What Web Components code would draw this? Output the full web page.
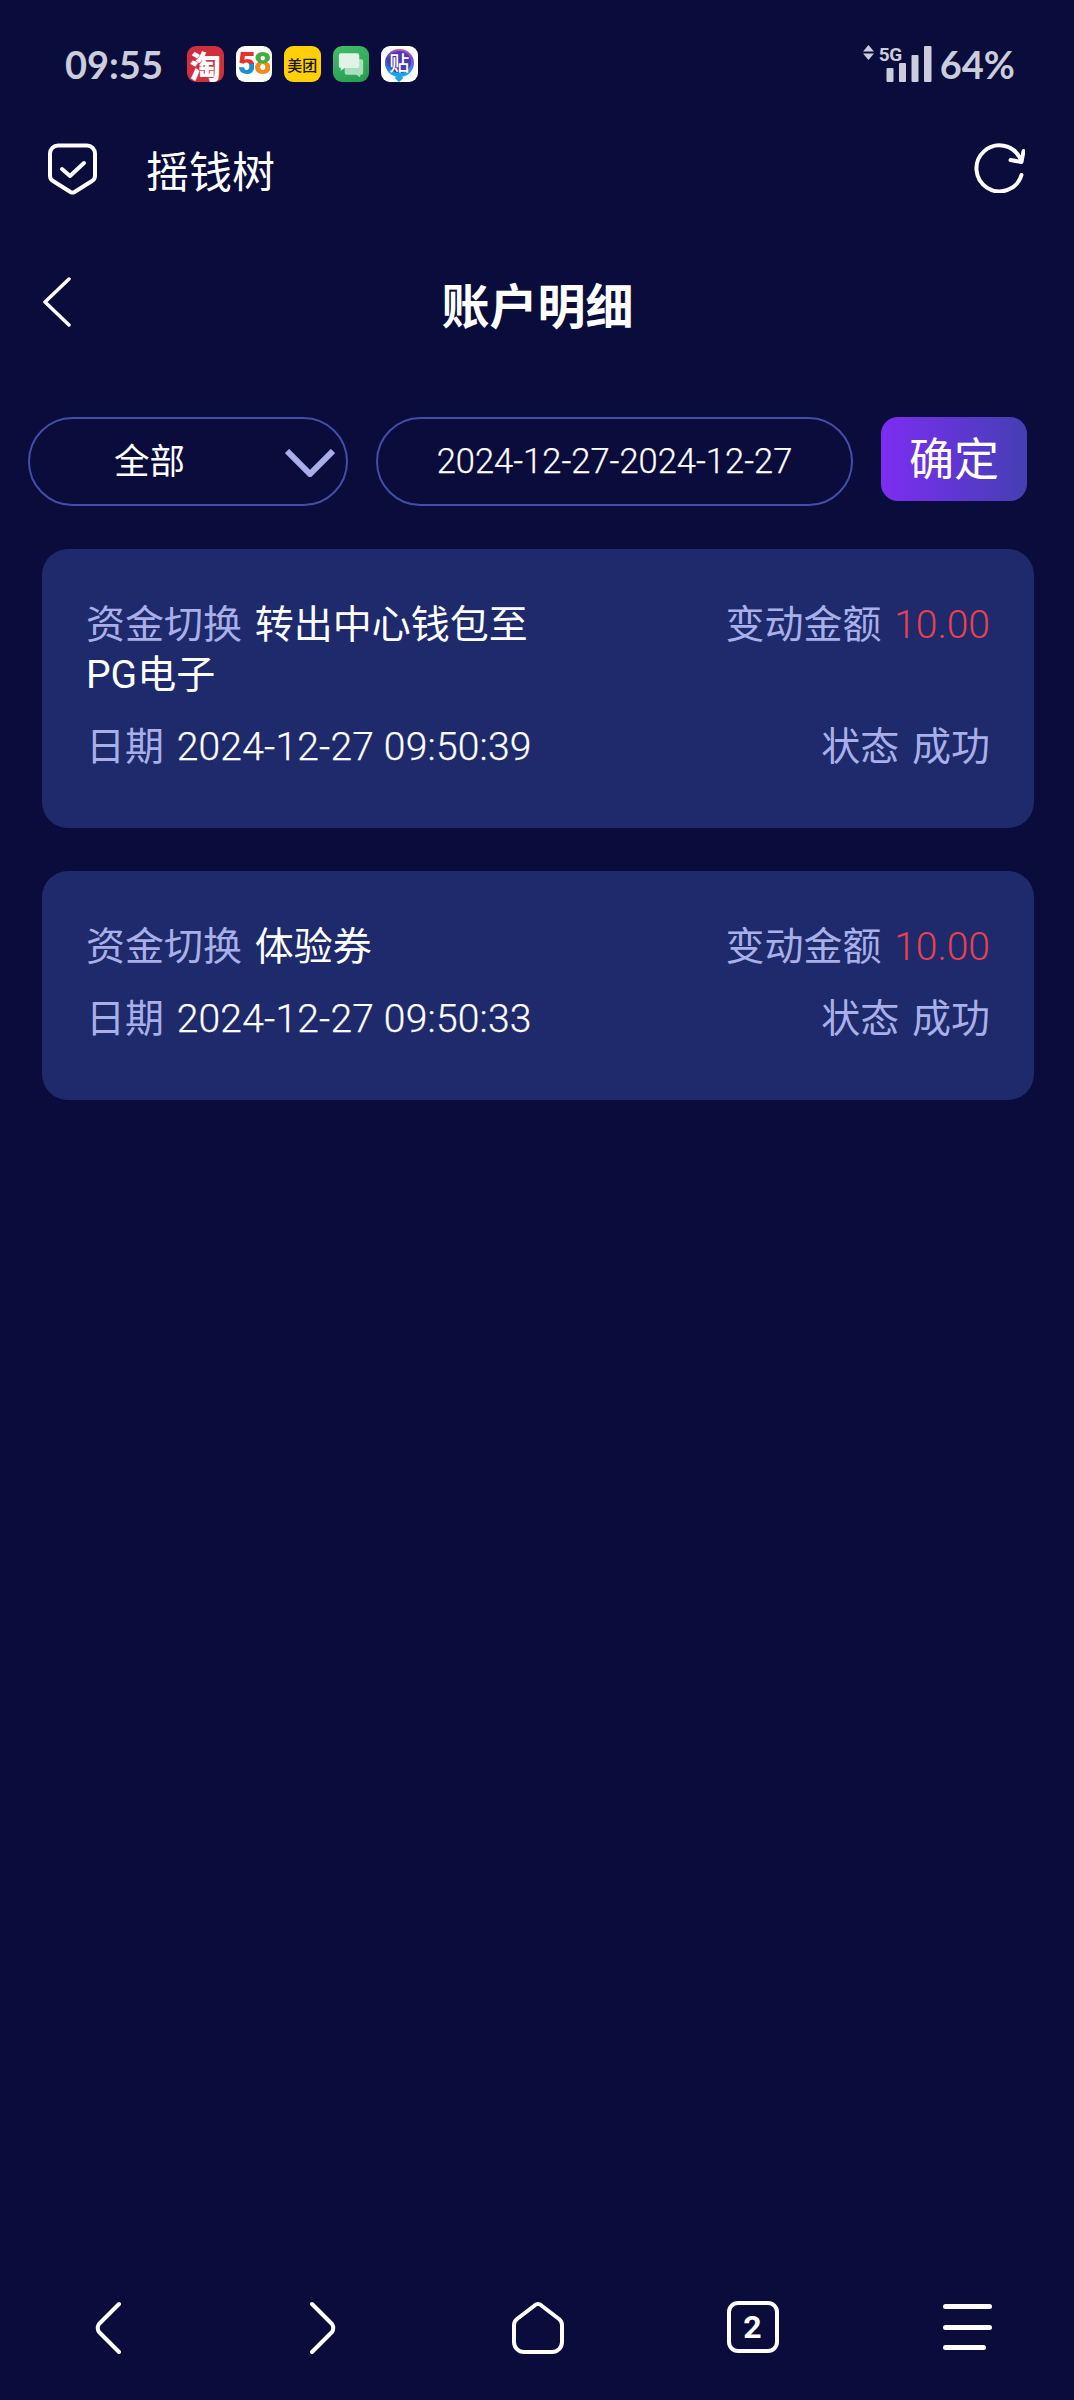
<!DOCTYPE html>
<html lang="zh-CN">
<head>
<meta charset="utf-8">
<title>账户明细</title>
<style>
  html, body { margin: 0; background: #0a0c3b; }
  body { font-family: Roboto, "Noto Sans CJK SC", sans-serif; color: #fff; }
</style>
</head>
<body>
<account-page>
  <status-bar></status-bar>
  <site-bar>摇钱树</site-bar>
  <page-nav>账户明细</page-nav>
  <filter-bar></filter-bar>
  <record-list>
    <record-card>
      <span slot="detail">转出中心钱包至</span><span slot="detail">PG电子</span>
      <span slot="amount">10.00</span>
      <span slot="date">2024-12-27 09:50:39</span>
      <span slot="state">成功</span>
    </record-card>
    <record-card>
      <span slot="detail">体验券</span>
      <span slot="amount">10.00</span>
      <span slot="date">2024-12-27 09:50:33</span>
      <span slot="state">成功</span>
    </record-card>
  </record-list>
  <bottom-bar></bottom-bar>
</account-page>

<script>
// Small helper: one template per element, parsed only once.
function makeTemplate(html) {
  const t = document.createElement('template');
  t.innerHTML = html;
  return t;
}

function register(tag, html) {
  const template = makeTemplate(html);
  customElements.define(tag, class extends HTMLElement {
    constructor() {
      super();
      this.attachShadow({ mode: 'open' });
      this.shadowRoot.appendChild(template.content.cloneNode(true));
    }
  });
}

register('account-page', /*html*/`
  <style>
    :host { display: flex; flex-direction: column; height: 2400px; background: #0a0c3b; overflow: hidden; }
  </style>
  <slot></slot>
`);

register('app-icon', /*html*/`
  <style>
    :host {
      display: flex; align-items: center; justify-content: center;
      position: relative;
      width: 36.5px; height: 36px; border-radius: 9px;
      background: var(--bg, #fff); color: var(--fg, #fff);
      font-family: "Noto Sans CJK SC", sans-serif; font-weight: 700;
      line-height: 1; white-space: nowrap;
    }
  </style>
  <slot></slot>
`);

register('status-bar', /*html*/`
  <style>
    :host {
      display: flex; align-items: flex-start; height: 36px;
      padding: 46px 59px 0 65px;
      font-family: Lato, sans-serif; font-weight: 700; color: #cbccdc;
    }
    .time { font-size: 38px; line-height: 44px; margin-top: -4px; height: 44px; width: 122px; }
    .apps { display: flex; gap: 12px; }
    .tao { --bg: #d12f3e; font-size: 31px; font-weight: 900; }
    .five { --bg: #fff; font-family: Roboto, sans-serif; font-size: 31px; letter-spacing: -2px; }
    .five b { font-weight: 900; line-height: 36px; -webkit-background-clip: text; background-clip: text; color: transparent; }
    .five .d5 { background-image: linear-gradient(#e5322d 50%, #1a8fdc 50%); }
    .five .d8 { background-image: linear-gradient(#43ad3f 48%, #f08a1d 48%); }
    .mt { --bg: #ffcf0a; --fg: #1a1500; font-size: 15px; font-weight: 500; }
    .msg { --bg: linear-gradient(160deg, #41bd69, #259b50); }
    .msg svg { display: block; }
    .tie { --bg: #fff; }
    .tie i {
      position: absolute; left: 4px; top: 3px; width: 29px; height: 28px; border-radius: 50%;
      background: conic-gradient(#e0479e, #7d4fd8, #1aa6e6, #1aa6e6, #3f44b8, #e0479e);
    }
    .tie i::after {
      content: ""; position: absolute; left: 3px; top: 2px; right: 3px; bottom: 4px;
      border-radius: 50%; background: #4a3bb0;
    }
    .tie u {
      position: absolute; left: 15px; bottom: 1.5px; width: 6px; height: 6px;
      background: #1aa6e6; transform: rotate(45deg);
    }
    .tie span { position: relative; font-size: 20px; font-weight: 500; color: #fff; margin-top: -3px; }
    .right { display: flex; align-items: flex-start; gap: 8px; margin-left: auto; }
    .signal { position: relative; width: 69px; height: 37px; margin-top: -1px; }
    .signal svg { display: block; }
    .signal span {
      position: absolute; left: 16px; top: 2px; font: 700 19px/16px Roboto, sans-serif;
      letter-spacing: -.5px;
    }
    .battery { font-size: 38px; line-height: 44px; margin-top: -4px; height: 44px; font-weight: 700; }
  </style>
  <div class="time">09:55</div>
  <div class="apps">
    <app-icon class="tao">淘</app-icon>
    <app-icon class="five"><b class="d5">5</b><b class="d8">8</b></app-icon>
    <app-icon class="mt">美团</app-icon>
    <app-icon class="msg">
      <svg width="36" height="36" viewBox="0 0 37 36">
        <path d="M14 13h15a2 2 0 0 1 2 2v12a2 2 0 0 1-2 2h-1v3l-4-3H14a2 2 0 0 1-2-2V15a2 2 0 0 1 2-2z" fill="#a9dfbc"/>
        <path d="M8 7h17a2 2 0 0 1 2 2v11a2 2 0 0 1-2 2H12l-4 3v-3a2 2 0 0 1-2-2V9a2 2 0 0 1 2-2z" fill="#e0f3e6"/>
      </svg>
    </app-icon>
    <app-icon class="tie"><i></i><u></u><span>贴</span></app-icon>
  </div>
  <div class="right">
    <div class="signal">
      <svg width="69" height="37" viewBox="0 0 69 37" fill="#cbccdc">
        <path d="M5.500 0 11 6.500H0zM5.500 15 0 8.500H11z"/>
        <rect x="23.500" y="23" width="7" height="14" rx="1"/>
        <rect x="36" y="18" width="7" height="19" rx="1"/>
        <rect x="48.500" y="10" width="7" height="27" rx="1"/>
        <rect x="61" y="1" width="7.500" height="36" rx="1"/>
      </svg>
      <span>5G</span>
    </div>
    <div class="battery">64%</div>
  </div>
`);

register('site-bar', /*html*/`
  <style>
    :host {
      display: flex; align-items: flex-start; margin-top: 61px; padding: 0 49px 0 48px;
      font-family: "Noto Sans CJK SC", sans-serif; font-size: 43px; font-weight: 400; color: #fff;
    }
    .name { margin-left: 49px; line-height: 52px; }
    .reload { margin-left: auto; display: block; }
    svg { display: block; fill: none; stroke: #fff; stroke-width: 4; stroke-linecap: round; stroke-linejoin: round; }
  </style>
  <svg width="49" height="52" viewBox="0 0 49 52">
    <path d="M10 2.500H39a8 8 0 0 1 8 8V33a6 6 0 0 1-3 5L26.500 49a4 4 0 0 1-4 0L5 38a6 6 0 0 1-3-5V10.500a8 8 0 0 1 8-8z"/>
    <path d="M14 26l8 7 14-13"/>
  </svg>
  <div class="name"><slot></slot></div>
  <svg class="reload" width="51" height="50" viewBox="0 0 51 50">
    <path d="M47.500 32A23 23 0 1 1 46 15"/>
    <path d="M49.500 8 47.500 19 36.500 17"/>
  </svg>
`);

register('page-nav', /*html*/`
  <style>
    :host {
      display: grid; grid-template-columns: 1fr auto 1fr; align-items: center;
      margin-top: 82px; padding-left: 43px; height: 50px;
    }
    svg { display: block; fill: none; stroke: #fff; stroke-width: 3.500; stroke-linecap: round; stroke-linejoin: round; }
    h1 {
      margin: 0; font: 700 48px/50px "Noto Sans CJK SC", sans-serif; color: #fff;
      transform: translate(-21px, 1px);
    }
  </style>
  <svg width="28" height="50" viewBox="0 0 28 50"><path d="M26 2 2 25l24 23"/></svg>
  <h1><slot></slot></h1>
  <span></span>
`);

register('filter-bar', /*html*/`
  <style>
    :host { display: flex; align-items: flex-start; gap: 28px; margin-top: 90px; padding-left: 28px; }
    .pill {
      box-sizing: border-box; height: 89px; border: 2.500px solid #414fa8; border-radius: 45px;
      display: flex; align-items: center; color: #fff; line-height: 1;
    }
    .type {
      width: 320px; padding: 0 11px 6px 84px;
      font: 400 35.500px "Noto Sans CJK SC", sans-serif;
    }
    .type svg { display: block; margin-left: auto; margin-top: 8px; fill: none; stroke: #a9aeea; stroke-width: 6; }
    .range {
      width: 477px; padding-bottom: 2px; justify-content: center;
      font: 300 34.500px Roboto, sans-serif; -webkit-text-stroke: .25px #fff;
    }
    button {
      width: 146px; height: 84px; padding: 0 0 6px; border: 0; border-radius: 17px;
      background: linear-gradient(90deg, #7d2df2, #443fb4); color: #fff;
      font: 400 45px "Noto Sans CJK SC", sans-serif;
    }
  </style>
  <div class="pill type">全部
    <svg width="50" height="28" viewBox="0 0 50 28"><path d="M2 2l23 23L48 2"/></svg>
  </div>
  <div class="pill range">2024-12-27-2024-12-27</div>
  <button>确定</button>
`);

register('record-list', /*html*/`
  <style>
    :host { display: flex; flex-direction: column; gap: 43px; margin: 43px 40px 0 42px; }
  </style>
  <slot></slot>
`);

register('record-card', /*html*/`
  <style>
    :host {
      display: grid; grid-template-columns: 455px 1fr; row-gap: 22px;
      padding: 51px 44px 56px; border-radius: 26px; background: #1e2a6b;
      font: 400 39px/50px Roboto, "Noto Sans CJK SC", sans-serif; word-spacing: 3px; color: #fff;
    }
    .label { color: #a9afe8; }
    .end { text-align: right; }
    .red { color: #e8414f; font-weight: 300; }
    .soft { color: #a9afe8; }
    ::slotted([slot="date"]) {
      font-weight: 300; word-spacing: 0; letter-spacing: .2px; -webkit-text-stroke: .25px #fff;
    }
  </style>
  <div><span class="label">资金切换</span> <slot name="detail"></slot></div>
  <div class="end"><span class="label">变动金额</span> <span class="red"><slot name="amount"></slot></span></div>
  <div><span class="label">日期</span> <slot name="date"></slot></div>
  <div class="end soft"><span>状态</span> <slot name="state"></slot></div>
`);

register('bottom-bar', /*html*/`
  <style>
    :host {
      display: grid; grid-template-columns: repeat(5, 215px); justify-items: center; align-items: start;
      margin-top: auto; height: 99px;
    }
    svg { display: block; fill: none; stroke: #fff; stroke-width: 4; stroke-linecap: round; stroke-linejoin: round; }
    .tabs {
      box-sizing: border-box; width: 52px; height: 52px; border: 4px solid #fff; border-radius: 11px;
      display: flex; align-items: center; justify-content: center;
      font: 700 32px/1 Roboto, sans-serif; color: #fff;
    }
    .menu { display: flex; flex-direction: column; gap: 15.500px; width: 49px; margin-top: 3px; }
    .menu i { display: block; height: 5px; border-radius: 3px; background: #fff; }
    .menu i:last-child { width: 43px; }
  </style>
  <svg width="26" height="54" viewBox="0 0 26 54"><path d="M24 3 4 23q-2.500 4 0 8l20 20"/></svg>
  <svg width="26" height="54" viewBox="0 0 26 54"><path d="M2 3l20 20q2.500 4 0 8L2 51"/></svg>
  <svg width="52" height="54" viewBox="0 0 52 54"><path d="M22 5a5 5 0 0 1 8 0l17 13a8 8 0 0 1 3 6v17a10 10 0 0 1-10 10H12A10 10 0 0 1 2 41V24a8 8 0 0 1 3-6z"/></svg>
  <div class="tabs">2</div>
  <div class="menu"><i></i><i></i><i></i></div>
`);
</script>
</body>
</html>
